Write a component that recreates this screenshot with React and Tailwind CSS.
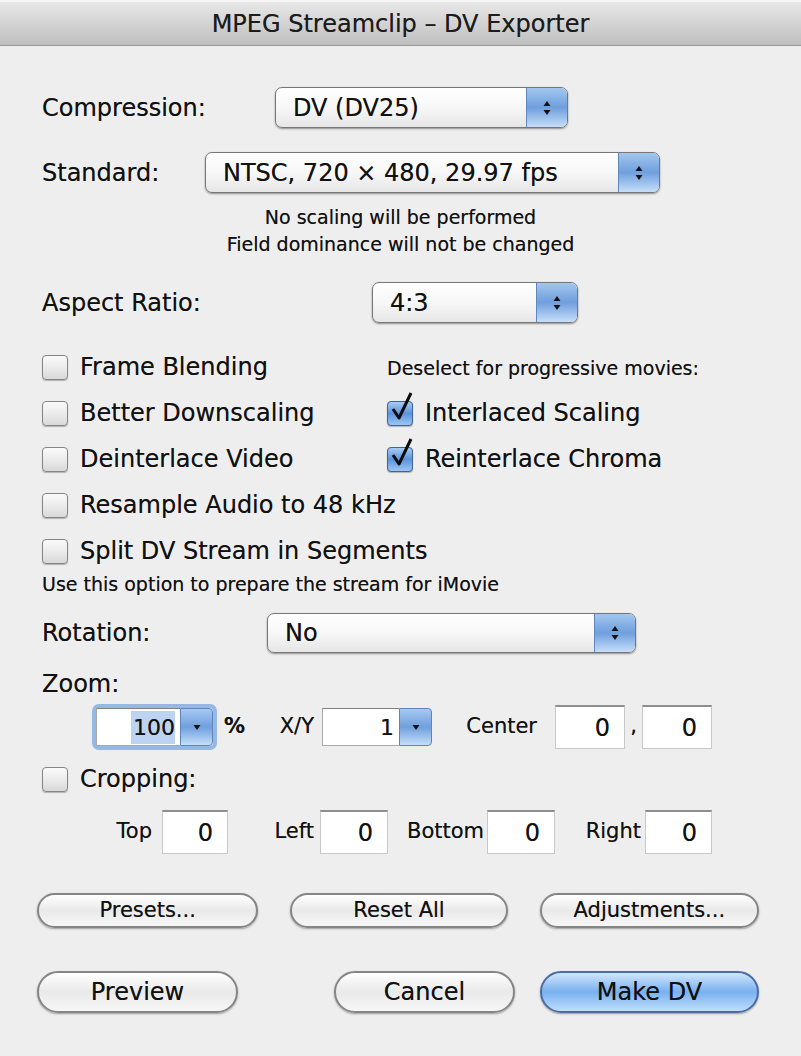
import React from "react";

function Stepper() {
  return (
    <svg width="10" height="20" viewBox="0 0 10 20">
      <polygon points="5,3 8.5,8 1.5,8" fill="#111" />
      <polygon points="1.5,12 8.5,12 5,17" fill="#111" />
    </svg>
  );
}

function Popup({ width, height = "h-[41px]", children }) {
  return (
    <div
      className={`flex ${width} ${height} overflow-hidden rounded-[7px] border border-[#777] bg-linear-to-b from-white via-[#f7f7f7] to-[#e6e6e6] shadow-[0_1px_2px_rgba(0,0,0,0.4)]`}
    >
      <div className="flex flex-1 items-center pl-[17px] text-[24px] leading-none">{children}</div>
      <div className="flex w-[41px] items-center justify-center border-l border-[#5f86bd] bg-linear-to-b from-[#a3c6ef] via-[#6f9fdd] to-[#c6def9]">
        <Stepper />
      </div>
    </div>
  );
}

function Check({ checked }) {
  if (checked) {
    return (
      <span className="relative block h-[25px] w-[26px] shrink-0">
        <span className="block h-full w-full rounded-[4px] border border-[#3f639b] bg-[#6a9de0] bg-linear-to-b from-[#a9cbf3] via-[#5b93dd] to-[#9ec6f2] shadow-[0_1px_1px_rgba(0,0,0,0.25)]" />
        <svg className="absolute -top-[10px] left-[2px]" width="26" height="31" viewBox="0 0 26 31">
          <path d="M4 18 L10 27 L22 2" fill="none" stroke="#0d0d0d" strokeWidth="3" strokeLinejoin="round" />
        </svg>
      </span>
    );
  }
  return (
    <span className="block h-[25px] w-[26px] shrink-0 rounded-[4px] border border-[#858585] bg-linear-to-b from-[#fafafa] via-[#ebebeb] to-[#d9d9d9] shadow-[0_1px_1px_rgba(0,0,0,0.25)]" />
  );
}

function CheckRow({ checked, children }) {
  return (
    <div className="flex h-[46px] items-center gap-[12px] text-[24px]">
      <Check checked={checked} />
      <span>{children}</span>
    </div>
  );
}

function Field({ width, children }) {
  return (
    <div
      className={`flex ${width} h-[44px] items-center justify-end border-x border-b border-t-2 border-[#c8c8c8] border-t-[#8e8e8e] bg-white pr-[14px] text-[24px]`}
    >
      {children}
    </div>
  );
}

function Combo({ width, focused, children }) {
  return (
    <div
      className={`flex ${width} h-[38px] rounded-[3px] ${
        focused ? "shadow-[0_0_0_4px_rgba(120,165,225,0.75)]" : ""
      }`}
    >
      <div className="flex flex-1 items-center justify-end border border-r-0 border-[#a9a9a9] border-t-[#7f7f7f] bg-white pr-[5px] text-[22px]">
        {children}
      </div>
      <div className="flex w-[33px] items-center justify-center rounded-r-[4px] border border-[#5e84ba] bg-linear-to-b from-[#a8c9f1] via-[#6f9fdd] to-[#c6def9]">
        <svg width="10" height="8" viewBox="0 0 10 8">
          <polygon points="1.5,2 8.5,2 5,7" fill="#111" />
        </svg>
      </div>
    </div>
  );
}

function Button({ width, height, blue, size, children }) {
  return (
    <div
      className={`flex ${width} ${height} ${size} items-center justify-center rounded-full border-2 shadow-[0_1px_2px_rgba(0,0,0,0.35)] ${
        blue
          ? "border-[#4a6ca3] bg-linear-to-b from-[#d2e6fc] via-[#78b0ef] to-[#bfdffc]"
          : "border-[#858585] bg-linear-to-b from-white via-[#e9e9e9] to-[#f7f7f7]"
      }`}
    >
      {children}
    </div>
  );
}

export default function App() {
  return (
    <div className="flex h-[1056px] w-[801px] flex-col overflow-hidden bg-[#eeeeee] font-['DejaVu_Sans',sans-serif] text-[#111] [text-shadow:0_0_0.6px_rgba(0,0,0,0.55)]">
      <div className="flex h-[46px] shrink-0 items-center justify-center border-t-2 border-b border-t-[#f6f6f6] border-b-[#999] bg-linear-to-b from-[#e8e8e8] to-[#bfbfbf] text-[24px] text-[#1c1c1c]">
        MPEG Streamclip – DV Exporter
      </div>

      <div className="flex flex-col px-[42px]">
        <div className="mt-[41px] flex items-center">
          <span className="w-[233px] text-[24px]">Compression:</span>
          <Popup width="w-[293px]">DV (DV25)</Popup>
        </div>

        <div className="mt-[24px] flex items-center">
          <span className="w-[163px] text-[24px]">Standard:</span>
          <Popup width="w-[455px]">NTSC, 720 × 480, 29.97 fps</Popup>
        </div>

        <div className="mt-[11px] text-center text-[19px] leading-[27px]">
          <p>No scaling will be performed</p>
          <p>Field dominance will not be changed</p>
        </div>

        <div className="mt-[24px] flex items-center">
          <span className="w-[330px] text-[24px]">Aspect Ratio:</span>
          <Popup width="w-[206px]">4:3</Popup>
        </div>

        <div className="mt-[21px] grid grid-cols-[345px_1fr]">
          <CheckRow>Frame Blending</CheckRow>
          <div className="flex h-[46px] items-center pt-[3px] text-[19px]">Deselect for progressive movies:</div>
          <CheckRow>Better Downscaling</CheckRow>
          <CheckRow checked>Interlaced Scaling</CheckRow>
          <CheckRow>Deinterlace Video</CheckRow>
          <CheckRow checked>Reinterlace Chroma</CheckRow>
          <div className="col-span-2">
            <CheckRow>Resample Audio to 48 kHz</CheckRow>
          </div>
          <div className="col-span-2">
            <CheckRow>Split DV Stream in Segments</CheckRow>
          </div>
        </div>
        <p className="text-[19px] leading-[20px]">Use this option to prepare the stream for iMovie</p>

        <div className="mt-[19px] flex items-center">
          <span className="w-[225px] text-[24px]">Rotation:</span>
          <Popup width="w-[369px]" height="h-[40px]">No</Popup>
        </div>

        <div className="mt-[16px] text-[24px] leading-[30px]">Zoom:</div>

        <div className="mt-[5px] flex h-[46px] items-center text-[21px]">
          <div className="ml-[54px]">
            <Combo width="w-[117px]" focused>
              <span className="bg-[#bcd4f2] pl-[2px]">100</span>
            </Combo>
          </div>
          <span className="w-[32px] text-right font-bold">%</span>
          <span className="w-[69px] text-right">X/Y</span>
          <div className="ml-[8px]">
            <Combo width="w-[110px]">1</Combo>
          </div>
          <span className="w-[105px] text-right">Center</span>
          <div className="ml-[18px]">
            <Field width="w-[70px]">0</Field>
          </div>
          <span className="w-[17px] self-end pb-[8px] text-center">,</span>
          <Field width="w-[70px]">0</Field>
        </div>

        <div className="mt-[6px]">
          <CheckRow>Cropping:</CheckRow>
        </div>

        <div className="mt-[8px] flex h-[44px] items-center text-[21px]">
          <span className="w-[110px] text-right">Top</span>
          <div className="ml-[10px]">
            <Field width="w-[66px]">0</Field>
          </div>
          <span className="w-[86px] text-right">Left</span>
          <div className="ml-[6px]">
            <Field width="w-[68px]">0</Field>
          </div>
          <span className="w-[96px] text-right">Bottom</span>
          <div className="ml-[3px]">
            <Field width="w-[68px]">0</Field>
          </div>
          <span className="w-[86px] text-right">Right</span>
          <div className="ml-[4px]">
            <Field width="w-[67px]">0</Field>
          </div>
        </div>

        <div className="-ml-[5px] mt-[39px] flex gap-[32px]">
          <Button width="w-[222px]" height="h-[35px]" size="text-[21px]">Presets...</Button>
          <Button width="w-[218px]" height="h-[35px]" size="text-[21px]">Reset All</Button>
          <Button width="w-[220px]" height="h-[35px]" size="text-[21px]">Adjustments...</Button>
        </div>

        <div className="-ml-[5px] mt-[43px] flex">
          <Button width="w-[201px]" height="h-[42px]" size="text-[24px]">Preview</Button>
          <div className="ml-[96px]">
            <Button width="w-[181px]" height="h-[42px]" size="text-[24px]">Cancel</Button>
          </div>
          <div className="ml-[25px]">
            <Button width="w-[219px]" height="h-[42px]" size="text-[24px]" blue>Make DV</Button>
          </div>
        </div>
      </div>
    </div>
  );
}
